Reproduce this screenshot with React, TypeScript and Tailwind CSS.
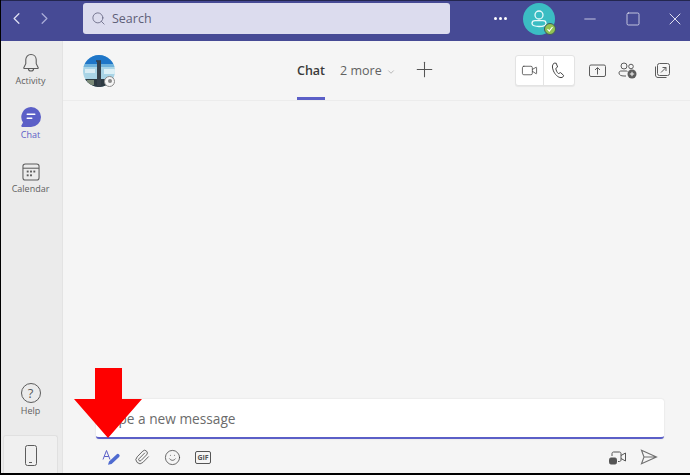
import { ChevronDown, ChevronLeft, ChevronRight, Minus, Paperclip, Plus, Search, Smile, Square, Video, X } from 'lucide-react';

const ink = '#5c5c5c';

function RailItem({ label, icon, active, height }: { label: string; icon: React.ReactNode; active?: boolean; height: string }) {
  return (
    <div className={`flex flex-col items-center justify-end ${height}`}>
      {icon}
      <span className={active ? 'mt-[2px] text-[9px] leading-[12px] text-[#5b5fc7]' : 'mt-[2px] text-[9px] leading-[12px] text-[#616161]'}>
        {label}
      </span>
    </div>
  );
}

function Avatar() {
  return (
    <div className="relative h-[32px] w-[32px]">
      <svg width="32" height="32" viewBox="0 0 32 32" className="blur-[0.5px]">
        <defs>
          <clipPath id="c"><circle cx="16" cy="16" r="16" /></clipPath>
        </defs>
        <g clipPath="url(#c)">
          <rect width="32" height="32" fill="#a9d4e6" />
          <rect width="32" height="9" fill="#1f76c8" />
          <rect y="9" width="32" height="3" fill="#6fb2dc" />
          <rect y="24" width="32" height="8" fill="#2d3a42" />
          <rect x="2" y="14" width="10" height="4" fill="#d8ecf4" />
          <rect x="21" y="14" width="11" height="5" fill="#dcf0f6" />
          <rect x="13" y="5" width="5" height="2" fill="#2b4a6a" />
          <rect x="14" y="6" width="4" height="26" fill="#37424c" />
          <rect x="4" y="25" width="7" height="5" fill="#7b8a78" />
        </g>
      </svg>
      <div className="absolute right-[0px] bottom-[0px] flex h-[11px] w-[11px] items-center justify-center rounded-full border border-[#8a8a8a] bg-[#f5f5f5]">
        <div className="h-[4px] w-[4px] rounded-full bg-[#8a8a8a]" />
      </div>
    </div>
  );
}

export default function App() {
  return (
    <div className="relative flex h-[475px] w-[690px] flex-col overflow-hidden border-b-2 border-l border-black bg-[#f5f5f5] font-['Open_Sans','Liberation_Sans',sans-serif]">
      {/* Title bar */}
      <div className="flex h-[41px] shrink-0 items-center border-t border-[#23264f] bg-[#464a95] pb-[5px]">
        <div className="flex w-[82px] items-center pl-[6px] text-[#c9cbe8]">
          <ChevronLeft size={19} strokeWidth={1.6} className="text-[#dfe0f2]" />
          <ChevronRight size={19} strokeWidth={1.6} className="ml-[9px] text-[#a9acd8]" />
        </div>
        <div className="flex h-[31px] w-[367px] items-center gap-[6px] rounded-[3px] bg-[#dcdcee] pl-[8px]">
          <Search size={15} strokeWidth={1.4} className="text-[#6a6a86]" />
          <span className="pt-[1px] text-[12.5px] text-[#5f6078]">Search</span>
        </div>
        <div className="ml-[44px] flex gap-[2.5px]">
          <div className="h-[2.5px] w-[2.5px] rounded-full bg-white" />
          <div className="h-[2.5px] w-[2.5px] rounded-full bg-white" />
          <div className="h-[2.5px] w-[2.5px] rounded-full bg-white" />
        </div>
        <div className="relative ml-[16px] flex h-[32px] w-[32px] items-center justify-center rounded-full bg-[#3bbdc3]">
          <svg width="20" height="20" viewBox="0 0 20 20" fill="none" stroke="#e9fafa" strokeWidth="1.3">
            <circle cx="10" cy="6" r="4" />
            <path d="M3 14.5c0-2 1.5-2.8 3-2.8h8c1.5 0 3 .8 3 2.8 0 2-3.5 3-7 3s-7-1-7-3z" />
          </svg>
          <div className="absolute right-[-1px] bottom-[0px] flex h-[12px] w-[12px] items-center justify-center rounded-full border border-[#3f5a5c] bg-[#92c353]">
            <svg width="8" height="8" viewBox="0 0 8 8" fill="none" stroke="white" strokeWidth="1.2"><path d="M1.5 4.2 3.3 6l3.2-4" /></svg>
          </div>
        </div>
        <Minus size={18} strokeWidth={1.1} className="ml-[26px] text-[#dfe0f2]" />
        <Square size={16} strokeWidth={1.1} className="ml-[26px] text-[#eeeef8]" />
        <X size={20} strokeWidth={1.1} className="ml-[24px] text-[#eeeef8]" />
      </div>

      <div className="flex min-h-0 flex-1">
        {/* Left rail */}
        <div className="flex w-[62px] shrink-0 flex-col border-r border-[#e3e3e3] bg-[#ebebeb] pr-[2px]">
          <RailItem
            label="Activity"
            height="h-[46px]"
            icon={
              <svg width="18" height="20" viewBox="0 0 20 22" fill="none" stroke={ink} strokeWidth="1.2">
                <path d="M10 1.5c-3.6 0-5.8 2.7-5.8 6v4.2L2 16.2c-.2.5.1 1 .7 1h14.6c.6 0 .9-.5.7-1l-2.2-4.5V7.5c0-3.3-2.2-6-5.8-6z" />
                <path d="M7 17.2c.2 1.7 1.4 2.7 3 2.7s2.8-1 3-2.7" />
              </svg>
            }
          />
          <RailItem
            label="Chat"
            active
            height="h-[54px]"
            icon={
              <svg width="20" height="20" viewBox="0 0 20 20">
                <path d="M10 0a10 10 0 0 1 0 20H1.2c-.8 0-1.2-.8-.8-1.4L2 15.5A10 10 0 0 1 10 0z" fill="#5b5fc7" />
                <rect x="5.5" y="6.5" width="9" height="1.5" rx=".7" fill="#fff" />
                <rect x="5.5" y="10.5" width="6" height="1.5" rx=".7" fill="#fff" />
              </svg>
            }
          />
          <RailItem
            label="Calendar"
            height="h-[54px]"
            icon={
              <svg width="18" height="18" viewBox="0 0 19 19" fill="none" stroke={ink} strokeWidth="1.1">
                <rect x="1" y="1" width="17" height="17" rx="2.5" />
                <path d="M1 5.5h17" />
                <g fill={ink} stroke="none">
                  <rect x="5" y="8" width="2" height="2" /><rect x="8.5" y="8" width="2" height="2" /><rect x="12" y="8" width="2" height="2" />
                  <rect x="5" y="12" width="2" height="2" /><rect x="8.5" y="12" width="2" height="2" />
                </g>
              </svg>
            }
          />
          <div className="flex-1" />
          <div className="mb-[18px] flex flex-col items-center">
            <div className="flex h-[20px] w-[20px] items-center justify-center rounded-full border-[1.2px] border-[#5c5c5c] text-[13px] leading-none text-[#5c5c5c]">?</div>
            <span className="mt-[2px] text-[9px] leading-[12px] text-[#616161]">Help</span>
          </div>
          <div className="mr-[2px] ml-[2px] flex h-[38px] items-center justify-center rounded-t-[3px] border border-b-0 border-[#e0e0e0] bg-[#f0f0f0] pt-[1px]">
            <div className="relative h-[21px] w-[12px] rounded-[2.5px] border-[1.2px] border-[#5c5c5c]">
              <div className="absolute bottom-[2px] left-[3px] h-[1px] w-[3px] bg-[#5c5c5c]" />
            </div>
          </div>
        </div>

        {/* Main */}
        <div className="flex min-w-0 flex-1 flex-col">
          <div className="flex h-[60px] shrink-0 items-center border-b border-[#ececec] pr-[20px] pl-[20px]">
            <Avatar />
            <div className="ml-[182px] flex h-full items-center">
              <div className="relative flex h-full items-center pt-[2px]">
                <span className="text-[12.5px] font-semibold text-[#3a3a3a]">Chat</span>
                <div className="absolute right-0 bottom-0 left-0 h-[3px] bg-[#5b5fc7]" />
              </div>
              <span className="ml-[15px] pt-[2px] text-[12.5px] text-[#616161]">2 more</span>
              <ChevronDown size={10} strokeWidth={1.2} className="mt-[3px] ml-[4px] text-[#7a7a7a]" />
              <Plus size={25} strokeWidth={1} className="mb-[3px] ml-[16px] text-[#555]" />
            </div>
            <div className="flex-1" />
            <div className="flex h-[31px] w-[60px] rounded-[3px] border border-[#e3e3e3] bg-white shadow-[0_1px_1px_rgba(0,0,0,0.06)]">
              <div className="flex w-[28px] items-center justify-center border-r border-[#e3e3e3]">
                <Video size={17} strokeWidth={1.1} className="text-[#444]" />
              </div>
              <div className="flex flex-1 items-center justify-center pr-[3px]">
                <svg width="15" height="17" viewBox="0 0 15 17" fill="none" stroke="#444" strokeWidth="1">
                  <path d="M4.2 1.2C2.2 2.2 1.8 5 3.4 8.8c1.6 3.8 4.6 6.8 7.6 6.8 1.6 0 2.6-1 2.6-2.2l-3-2.8-2.2 1C7 10.4 6 8.4 5.8 6.4L7.6 5 6.2 1.2z" />
                </svg>
              </div>
            </div>
            <svg width="17" height="14" viewBox="0 0 17 14" fill="none" stroke={ink} strokeWidth="1" className="ml-[14px]">
              <rect x=".5" y="1" width="16" height="11.5" rx="1.5" />
              <path d="M8.5 10.5V4M6 6l2.5-2.5L11 6" />
            </svg>
            <svg width="19" height="17" viewBox="0 0 19 17" fill="none" stroke={ink} strokeWidth="1" className="ml-[12px]">
              <circle cx="6" cy="4" r="3" />
              <circle cx="13" cy="4.5" r="2.3" />
              <path d="M1 11c0-1.5 1-2 2-2h5c.5 0 1 .1 1.5.4M1 11c0 2 2 3 5 3h2" />
              <circle cx="14" cy="12" r="4.5" fill={ink} stroke="none" />
              <path d="M14 9.8v4.4M11.8 12h4.4" stroke="#f5f5f5" />
            </svg>
            <svg width="15" height="15" viewBox="0 0 15 15" fill="none" stroke={ink} strokeWidth="1" className="ml-[18px]">
              <rect x="2.5" y=".5" width="12" height="12" rx="2" />
              <path d="M.5 3.5v8.5c0 1.5 1 2.5 2.5 2.5h8.5" />
              <path d="M6 9.5l5-5M7.5 4.5H11V8" />
            </svg>
          </div>

          <div className="flex-1" />

          {/* Composer */}
          <div className="mr-[26px] ml-[33px] flex h-[40px] shrink-0 items-center rounded-[3px] border-b-2 border-[#5b5fc7] bg-white pt-[2px] pl-[8px] shadow-[0_0_2px_rgba(0,0,0,0.12)]">
            <span className="text-[13.7px] text-[#6b6b6b]">Type a new message</span>
          </div>
          <div className="flex h-[34px] shrink-0 items-center pt-[2px] pr-[32px] pl-[39px]">
            <svg width="19" height="17" viewBox="0 0 19 17" className="shrink-0">
              <path d="M1 10.5 4.5 1.5 8 10.5M2.2 7.5h4.6" fill="none" stroke="#5b5fc7" strokeWidth="1" />
              <path d="M6 15.8l1-3.4 7.5-7a1.8 1.8 0 0 1 2.6 2.6l-7.5 6.9z" fill="#4f6bd0" />
            </svg>
            <Paperclip size={16} strokeWidth={1.2} className="ml-[13px] text-[#444]" />
            <Smile size={17} strokeWidth={1.1} className="ml-[14px] text-[#444]" />
            <div className="ml-[14px] flex h-[13px] w-[16px] items-center justify-center rounded-[2px] border border-[#555] text-[7px] leading-none font-bold text-[#555]">GIF</div>
            <div className="flex-1" />
            <svg width="18" height="15" viewBox="0 0 18 15" fill="none" stroke="#555" strokeWidth="1">
              <path d="M3 6V3.5C3 2.7 3.7 2 4.5 2h6c.8 0 1.5.7 1.5 1.5V10c0 .8-.7 1.5-1.5 1.5H9" />
              <path d="M12 5.5 16.5 3v8L12 8.5" />
              <rect x=".5" y="8" width="7" height="6" rx="1.5" fill="#555" />
            </svg>
            <svg width="18" height="16" viewBox="0 0 18 16" fill="none" stroke="#6f6f6f" strokeWidth="1.1" className="ml-[13px]">
              <path d="M1.5 1.2 16.5 8 1.5 14.8 4 8zM4 8h12.5" />
            </svg>
          </div>
        </div>
      </div>

      {/* Red annotation arrow */}
      <svg width="68" height="70" viewBox="0 0 68 70" className="absolute top-[368px] left-[73px]">
        <path d="M21 0h27v31h20L34 70 0 31h21z" fill="#fe0000" />
      </svg>
    </div>
  );
}
